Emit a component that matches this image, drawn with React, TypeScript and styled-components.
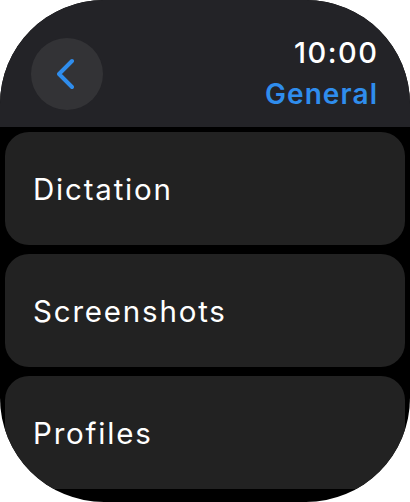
import React from "react";
import styled, { createGlobalStyle } from "styled-components";

const Global = createGlobalStyle`
  html, body { margin: 0; padding: 0; background: #ffffff; }
  body { font-family: Inter, "Noto Sans", sans-serif; -webkit-font-smoothing: antialiased; }
`;

const Screen = styled.div`
  width: 410px;
  height: 502px;
  background: #000;
  border-radius: 104px;
  overflow: hidden;
  display: flex;
  flex-direction: column;
`;

const Header = styled.header`
  height: 127px;
  flex: none;
  background: #232327;
  display: flex;
  justify-content: space-between;
  align-items: flex-start;
  padding: 0 33px 0 31px;
  box-sizing: border-box;
`;

const BackButton = styled.button`
  margin-top: 38px;
  width: 72px;
  height: 72px;
  border-radius: 50%;
  border: none;
  padding: 0;
  background: #333336;
  display: flex;
  align-items: center;
  justify-content: center;
`;

const TitleBlock = styled.div`
  display: flex;
  flex-direction: column;
  align-items: flex-end;
  padding-top: 34px;
`;

const Time = styled.div`
  color: #ffffff;
  font-size: 29px;
  font-weight: 500;
  line-height: 38px;
  letter-spacing: 1.5px;
  margin-right: -1.5px;
`;

const Title = styled.div`
  color: #2f8ded;
  font-size: 28px;
  font-weight: 600;
  line-height: 38px;
  letter-spacing: 1.1px;
  margin-right: -1.1px;
  margin-top: 3px;
`;

const List = styled.div`
  display: flex;
  flex-direction: column;
  gap: 9px;
  padding: 5px 5px 0;
`;

const Row = styled.div`
  height: 113px;
  flex: none;
  background: #222222;
  border-radius: 24px;
  display: flex;
  align-items: center;
  padding-left: 28px;
  box-sizing: border-box;
`;

const RowLabel = styled.span`
  color: #ffffff;
  font-size: 29.5px;
  font-weight: 400;
  letter-spacing: 1.8px;
`;

export default function App() {
  const items = ["Dictation", "Screenshots", "Profiles"];
  return (
    <>
      <Global />
      <Screen>
        <Header>
          <BackButton aria-label="Back">
            <svg width="20" height="32" viewBox="0 0 20 32" fill="none">
              <path
                d="M15 3 L2 16 L15 29"
                stroke="#2f8ded"
                strokeWidth="4"
                strokeLinecap="round"
                strokeLinejoin="round"
              />
            </svg>
          </BackButton>
          <TitleBlock>
            <Time>10:00</Time>
            <Title>General</Title>
          </TitleBlock>
        </Header>
        <List>
          {items.map((t) => (
            <Row key={t}>
              <RowLabel>{t}</RowLabel>
            </Row>
          ))}
        </List>
      </Screen>
    </>
  );
}
